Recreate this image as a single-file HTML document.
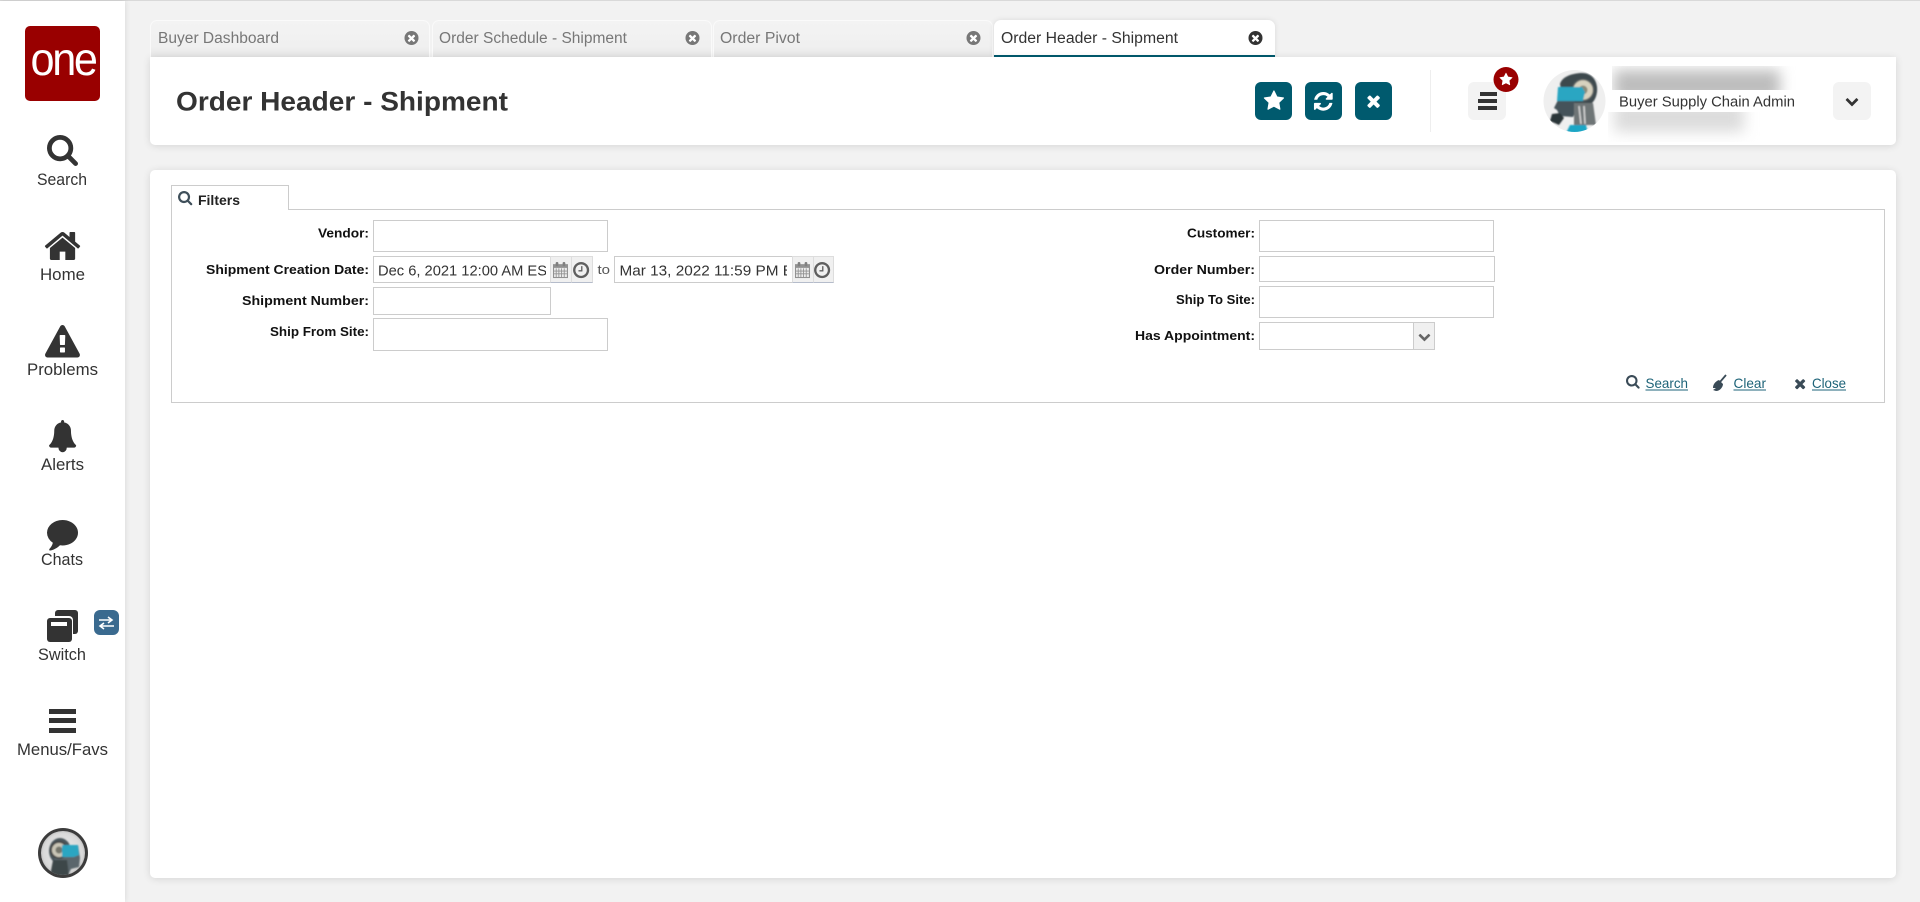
<!DOCTYPE html>
<html lang="en">
<head>
<meta charset="utf-8">
<title>Order Header - Shipment</title>
<style>
html,body{margin:0;padding:0;width:1920px;height:902px;overflow:hidden;background:#f2f2f2}
.a{position:absolute;box-sizing:border-box}
#side{left:0;top:1px;width:125px;height:901px;background:#fff;box-shadow:0 0 6px rgba(0,0,0,.12)}
#topline{left:0;top:0;width:1920px;height:1px;background:#d9d9d9}
.card{background:#fff;border-radius:0 0 5px 5px;box-shadow:0 1px 8px rgba(0,0,0,.12)}
.tab{top:20px;height:37px;background:linear-gradient(#f3f3f3,#f0f0f0 70%,#e6e6e6);border:1px solid #fafafa;border-bottom:0;border-radius:7px 7px 0 0}
.tb{background:#005a6e;border-radius:6px;top:82px;width:37px;height:38px}
.gb{background:#f3f3f3;border-radius:6px;top:82px;width:38px;height:38px}
.in{background:#fff;border:1px solid #ccc}
.cell{background:#f0f0f0;border:1px solid #ddd;border-bottom:1px solid #b5bccb;top:256px;height:27px}
.blur{overflow:hidden}
.blur div{position:absolute;filter:blur(7px)}
svg#o{position:absolute;left:0;top:0;width:1920px;height:902px}
text{font-family:"Liberation Sans",sans-serif;white-space:pre}
.nav{font-size:16.5px;fill:#333;text-anchor:start}
.tt{font-size:15.5px;fill:#777}
.lb{font-size:13px;font-weight:bold;fill:#111}
.ln{font-size:14px;fill:#1d6378}
</style>
</head>
<body>
<div class="a" id="topline"></div>
<div class="a" id="side"></div>

<div class="a tab" style="left:150px;width:280px"></div>
<div class="a tab" style="left:432px;width:280px"></div>
<div class="a tab" style="left:713px;width:280px"></div>
<div class="a" style="left:994px;top:20px;width:281px;height:37px;background:#fff;border-radius:7px 7px 0 0;border-bottom:2px solid #005a6e;box-shadow:0 0 6px rgba(0,0,0,.1)"></div>

<div class="a card" style="left:150px;top:57px;width:1746px;height:88px"></div>
<div class="a tb" style="left:1255px"></div>
<div class="a tb" style="left:1305px"></div>
<div class="a tb" style="left:1355px"></div>
<div class="a" style="left:1430px;top:70px;width:1px;height:62px;background:#eee"></div>
<div class="a gb" style="left:1468px"></div>
<div class="a gb" style="left:1833px"></div>
<div class="a blur" style="left:1612px;top:66px;width:185px;height:24px"><div style="left:2px;top:4px;width:166px;height:30px;background:#bdbdbd"></div></div>
<div class="a blur" style="left:1608px;top:112px;width:165px;height:30px"><div style="left:6px;top:-10px;width:130px;height:30px;background:#dcdcdc"></div></div>

<div class="a card" style="left:150px;top:170px;width:1746px;height:708px;border-radius:5px"></div>
<div class="a" style="left:171px;top:209px;width:1714px;height:194px;border:1px solid #ccc;background:#fff"></div>
<div class="a" style="left:171px;top:185px;width:118px;height:25px;border:1px solid #ccc;border-bottom:0;background:#fff"></div>

<div class="a in" style="left:373px;top:220px;width:235px;height:32px"></div>
<div class="a in" style="left:373px;top:256px;width:178px;height:27px"></div>
<div class="a cell" style="left:550px;width:22px"></div>
<div class="a cell" style="left:571px;width:22px"></div>
<div class="a in" style="left:614px;top:256px;width:179px;height:27px"></div>
<div class="a cell" style="left:792px;width:22px"></div>
<div class="a cell" style="left:813px;width:21px"></div>
<div class="a in" style="left:373px;top:287px;width:178px;height:28px"></div>
<div class="a in" style="left:373px;top:318px;width:235px;height:33px"></div>

<div class="a in" style="left:1259px;top:220px;width:235px;height:32px"></div>
<div class="a in" style="left:1259px;top:256px;width:236px;height:26px"></div>
<div class="a in" style="left:1259px;top:286px;width:235px;height:32px"></div>
<div class="a in" style="left:1259px;top:322px;width:176px;height:28px"></div>
<div class="a" style="left:1413px;top:322px;width:22px;height:28px;background:#f0f0f0;border:1px solid #ccc"></div>

<svg id="o" viewBox="0 0 1920 902" xmlns="http://www.w3.org/2000/svg">
<defs>
<path id="i-search" d="M1152 704q0-185-131.500-316.500t-316.500-131.500-316.500 131.500-131.500 316.500 131.500 316.500 316.500 131.500 316.500-131.500 131.500-316.500zm512 832q0 52-38 90t-90 38q-54 0-90-38l-343-342q-179 124-399 124-143 0-273.500-55.500t-225-150-150-225-55.500-273.500 55.500-273.500 150-225 225-150 273.500-55.500 273.500 55.500 225 150 150 225 55.500 273.500q0 220-124 399l343 343q37 37 37 90z"/>
<path id="i-home" d="M1472 992v480q0 26-19 45t-45 19h-384v-384h-256v384h-384q-26 0-45-19t-19-45v-480q0-1 .5-3t.5-3l575-474 575 474q1 2 1 6zm223-69l-62 74q-8 9-21 11h-3q-13 0-21-7l-692-577-692 577q-12 8-24 7-13-2-21-11l-62-74q-8-10-7-23.500t11-21.500l719-599q32-26 76-26t76 26l244 204v-195q0-14 9-23t23-9h192q14 0 23 9t9 23v408l219 182q10 8 11 21.500t-7 23.500z"/>
<path id="i-warn" d="M1024 1375v-190q0-14-9.500-23.500t-22.500-9.500h-192q-13 0-22.500 9.500t-9.500 23.500v190q0 14 9.500 23.500t22.500 9.500h192q13 0 22.500-9.500t9.500-23.500zm-2-374l18-459q0-12-10-19-13-11-24-11h-220q-11 0-24 11-10 7-10 21l17 457q0 10 10 16.500t24 6.500h185q14 0 23.500-6.500t10.500-16.500zm-14-934l768 1408q35 63-2 126-17 29-46.500 46t-63.500 17h-1536q-34 0-63.500-17t-46.500-46q-37-63-2-126l768-1408q17-31 47-49t65-18 65 18 47 49z"/>
<path id="i-bell" d="M1728 1408q0 52-38 90t-90 38h-448q0 106-75 181t-181 75-181-75-75-181h-448q-52 0-90-38t-38-90q50-42 91-88t85-119.500 74.500-158.500 50-206 19.500-260q0-152 117-282.500t307-158.500q-8-19-8-39 0-40 28-68t68-28 68 28 28 68q0 20-8 39 190 28 307 158.500t117 282.500q0 139 19.500 260t50 206 74.500 158.500 85 119.500 91 88z"/>
<path id="i-chat" d="M1792 896q0 174-120 321.500t-326 233-450 85.500q-70 0-145-8-198 175-460 242-49 14-114 22-17 2-30.500-9t-17.500-29v-1q-3-4-.5-12t2-10 4.500-9.500l6-9 7-8.500 8-9q7-8 31-34.500t34.500-38 31-39.500 32.500-51 27-59 26-76q-157-89-247.500-220t-90.500-281q0-130 71-248.500t191-204.500 286-136.500 348-50.500q244 0 450 85.500t326 233 120 321.500z"/>
<path id="i-ref" d="M1639 1056q0 5-1 7-64 268-268 434.500t-478 166.500q-146 0-282.500-55t-243.500-157l-129 129q-19 19-45 19t-45-19-19-45v-448q0-26 19-45t45-19h448q26 0 45 19t19 45-19 45l-137 137q71 66 161 102t187 36q134 0 250-65t186-179q11-17 53-117 8-23 30-23h192q13 0 22.500 9.500t9.500 22.500zm25-800v448q0 26-19 45t-45 19h-448q-26 0-45-19t-19-45 19-45l138-138q-148-137-349-137-134 0-250 65t-186 179q-11 17-53 117-8 23-30 23h-199q-13 0-22.500-9.500t-9.500-22.500v-7q65-268 270-434.500t480-166.500q146 0 284 55.500t245 156.500l130-129q19-19 45-19t45 19 19 45z"/>
<path id="i-star" d="M1728 647q0 22-26 48l-363 354 86 500q1 7 1 20 0 21-10.500 35.500t-30.500 14.500q-19 0-40-12l-449-236-449 236q-22 12-40 12-21 0-31.500-14.500t-10.500-35.500q0-6 2-20l86-500-364-354q-25-27-25-48 0-37 56-46l502-73 225-455q19-41 49-41t49 41l225 455 502 73q56 9 56 46z"/>
<path id="i-x" d="M1490 1322q0 40-28 68l-136 136q-28 28-68 28t-68-28l-294-294-294 294q-28 28-68 28t-68-28l-136-136q-28-28-28-68t28-68l294-294-294-294q-28-28-28-68t28-68l136-136q28-28 68-28t68 28l294 294 294-294q28-28 68-28t68 28l136 136q28 28 28 68t-28 68l-294 294 294 294q28 28 28 68z"/>
<path id="i-chev" d="M1683 808l-742 741q-19 19-45 19t-45-19l-742-741q-19-19-19-45.500t19-45.500l166-165q19-19 45-19t45 19l531 531 531-531q19-19 45-19t45 19l166 165q19 19 19 45.500t-19 45.500z"/>
<path id="i-clock" d="M1024 544v448q0 14-9 23t-23 9h-320q-14 0-23-9t-9-23v-64q0-14 9-23t23-9h224v-352q0-14 9-23t23-9h64q14 0 23 9t9 23zm416 352q0-148-73-273t-198-198-273-73-273 73-198 198-73 273 73 273 198 198 273 73 273-73 198-198 73-273zm224 0q0 209-103 385.500t-279.500 279.500-385.500 103-385.500-103-279.500-279.500-103-385.500 103-385.500 279.500-279.500 385.500-103 385.500 103 279.500 279.500 103 385.500z"/>
<g id="i-cal">
<rect x="0" y="2" width="14" height="13" fill="#919191"/>
<rect x="1" y="5.500" width="12" height="8.500" fill="#ececec"/>
<path d="M3 6v8M5.500 6v8M8 6v8M10.500 6v8M1 8.500h12M1 11h12" stroke="#919191" stroke-width=".8" fill="none"/>
<rect x="2.500" y="0" width="2.500" height="4" rx="1" fill="#808080"/>
<rect x="9" y="0" width="2.500" height="4" rx="1" fill="#808080"/>
</g>
<clipPath id="c1"><rect x="376" y="258" width="170" height="24"/></clipPath>
<clipPath id="c2"><rect x="617" y="258" width="170" height="24"/></clipPath>
<clipPath id="ca1"><circle cx="1574.500" cy="101" r="31"/></clipPath>
<clipPath id="ca2"><circle cx="63" cy="853" r="22"/></clipPath>
<radialGradient id="ag" cx=".5" cy=".5" r=".6"><stop offset="0" stop-color="#f0f0f0"/><stop offset=".75" stop-color="#d8d8d8"/><stop offset="1" stop-color="#9a9a9a"/></radialGradient>
<filter id="sb" x="-10%" y="-10%" width="120%" height="120%"><feGaussianBlur stdDeviation=".7"/></filter>
</defs>

<!-- logo -->
<rect x="25" y="26" width="75" height="75" rx="5" fill="#990000"/>
<text transform="translate(30.500,75) scale(.94,1)" font-size="46" fill="#fff" letter-spacing="-2.500">one</text>

<!-- nav -->
<g fill="#333">
<use href="#i-search" transform="translate(47,135) scale(.01863)"/>
<use href="#i-home" transform="translate(42.900,226.400) scale(.0219)"/>
<use href="#i-warn" transform="translate(45,325) scale(.0195)"/>
<use href="#i-bell" transform="translate(48,420) scale(.0163,.018)"/>
<use href="#i-chat" transform="translate(47,514.900) scale(.0173,.0199)"/>
<rect x="55" y="610" width="23" height="24" rx="3"/>
<rect x="46" y="616" width="27" height="27" rx="4" fill="#fff"/>
<rect x="47" y="618" width="25" height="24" rx="3"/>
<rect x="51" y="622" width="16" height="4" fill="#fff"/>
<rect x="49" y="709" width="27" height="5"/>
<rect x="49" y="718" width="27" height="5"/>
<rect x="49" y="728" width="27" height="5"/>
</g>
<text class="nav" x="37" y="185" textLength="50" lengthAdjust="spacingAndGlyphs">Search</text>
<text class="nav" x="40" y="280" textLength="45" lengthAdjust="spacingAndGlyphs">Home</text>
<text class="nav" x="27" y="375" textLength="71" lengthAdjust="spacingAndGlyphs">Problems</text>
<text class="nav" x="41" y="470" textLength="43" lengthAdjust="spacingAndGlyphs">Alerts</text>
<text class="nav" x="41" y="565" textLength="42" lengthAdjust="spacingAndGlyphs">Chats</text>
<text class="nav" x="38" y="660" textLength="48" lengthAdjust="spacingAndGlyphs">Switch</text>
<text class="nav" x="17" y="755" textLength="91" lengthAdjust="spacingAndGlyphs">Menus/Favs</text>

<!-- switch badge -->
<rect x="94" y="610" width="25" height="25" rx="6" fill="#3a6a8f"/>
<path d="M99 620h12M108 617l4 3-4 3M114 626h-13M104 623l-4 3 4 3" stroke="#fff" stroke-width="1.600" fill="none"/>

<!-- side avatar -->
<circle cx="63" cy="853" r="25" fill="#3c3c3c"/>
<circle cx="63" cy="853" r="22" fill="url(#ag)"/>
<g clip-path="url(#ca2)"><g filter="url(#sb)">
<ellipse cx="60" cy="851" rx="11" ry="13" fill="#49555a"/>
<path d="M62 845h16l2 13-1 9-8 2-3 6H52l2-15z" fill="#5a666c"/>
<path d="M53 860h14l2 16H50z" fill="#3d4649"/>
<circle cx="59" cy="850" r="8" fill="#c9c5b6" stroke="#444" stroke-width="1.800"/>
<circle cx="59" cy="850" r="3.500" fill="#75756a"/>
<path d="M62 845h16l1 10-5 2H62z" fill="#2aa6c2"/>
</g></g>

<!-- tabs -->
<text class="tt" x="158" y="43" textLength="121" lengthAdjust="spacingAndGlyphs">Buyer Dashboard</text>
<text class="tt" x="439" y="43" textLength="188" lengthAdjust="spacingAndGlyphs">Order Schedule - Shipment</text>
<text class="tt" x="720" y="43" textLength="80" lengthAdjust="spacingAndGlyphs">Order Pivot</text>
<text class="tt" style="fill:#333" x="1001" y="43" textLength="177" lengthAdjust="spacingAndGlyphs">Order Header - Shipment</text>
<circle cx="411.500" cy="38" r="7" fill="#777"/><use href="#i-x" fill="#fff" transform="translate(406,32.500) scale(.0061)"/>
<circle cx="692.500" cy="38" r="7" fill="#777"/><use href="#i-x" fill="#fff" transform="translate(687,32.500) scale(.0061)"/>
<circle cx="973.500" cy="38" r="7" fill="#777"/><use href="#i-x" fill="#fff" transform="translate(968,32.500) scale(.0061)"/>
<circle cx="1255.500" cy="38" r="7" fill="#333"/><use href="#i-x" fill="#fff" transform="translate(1250,32.500) scale(.0061)"/>

<!-- header -->
<text x="176" y="110.500" font-size="27" font-weight="bold" fill="#333" textLength="332" lengthAdjust="spacingAndGlyphs">Order Header - Shipment</text>
<use href="#i-star" fill="#fff" transform="translate(1263,90) scale(.0122)"/>
<use href="#i-ref" fill="#fff" transform="translate(1312.400,90.400) scale(.0122)"/>
<use href="#i-x" fill="#fff" transform="translate(1364.200,91.600) scale(.0105)"/>
<rect x="1480" y="92" width="17" height="4" fill="#333"/>
<rect x="1478" y="99" width="19" height="4" fill="#333"/>
<rect x="1478" y="106" width="19" height="4" fill="#333"/>
<circle cx="1506" cy="79.500" r="12.500" fill="#990000"/>
<use href="#i-star" fill="#fff" transform="translate(1499,72.500) scale(.0078)"/>

<!-- header avatar -->
<circle cx="1574.500" cy="101" r="31" fill="#efefef"/>
<g clip-path="url(#ca1)"><g filter="url(#sb)">
<path d="M1560 84c2-8 14-11 22-11 11 0 16 9 15 19-1 7-4 11-8 13l-26-2z" fill="#3d494e"/>
<path d="M1558 100h16l3 8-4 9-13-1-3-6-3-2z" fill="#44525a"/>
<path d="M1552 114l8-1 4 5-5 7-9-4z" fill="#2c3639"/>
<path d="M1574 103h19l3 22h-22z" fill="#6e7476"/>
<path d="M1579 106l2 18M1584 106l1 18" stroke="#d8d8d8" stroke-width="1.500"/>
<path d="M1570 125h16l2 8h-22z" fill="#1fa6c5"/>
<circle cx="1583" cy="90" r="10.500" fill="#d8d2bf" stroke="#596062" stroke-width="1.500"/>
<circle cx="1583" cy="90" r="4.500" fill="#8a8a78"/>
<path d="M1558 87h24l3 5-2 9h-26z" fill="#2aa6c2"/>
</g></g>
<text x="1619" y="106.500" font-size="15" fill="#333" textLength="176" lengthAdjust="spacingAndGlyphs">Buyer Supply Chain Admin</text>
<use href="#i-chev" fill="#333" transform="translate(1845,94) scale(.0078)"/>

<!-- filters -->
<use href="#i-search" fill="#3f4f5a" transform="translate(178,191) scale(.0086)"/>
<text x="198" y="205" font-size="14" font-weight="bold" fill="#222" textLength="42" lengthAdjust="spacingAndGlyphs">Filters</text>

<text class="lb" x="318" y="237.500" textLength="51" lengthAdjust="spacingAndGlyphs">Vendor:</text>
<text class="lb" x="206" y="274" textLength="163" lengthAdjust="spacingAndGlyphs">Shipment Creation Date:</text>
<text class="lb" x="242" y="305" textLength="127" lengthAdjust="spacingAndGlyphs">Shipment Number:</text>
<text class="lb" x="270" y="336" textLength="99" lengthAdjust="spacingAndGlyphs">Ship From Site:</text>
<text class="lb" x="1187" y="237.500" textLength="68" lengthAdjust="spacingAndGlyphs">Customer:</text>
<text class="lb" x="1154" y="274" textLength="101" lengthAdjust="spacingAndGlyphs">Order Number:</text>
<text class="lb" x="1176" y="304" textLength="79" lengthAdjust="spacingAndGlyphs">Ship To Site:</text>
<text class="lb" x="1135" y="340" textLength="120" lengthAdjust="spacingAndGlyphs">Has Appointment:</text>

<g clip-path="url(#c1)"><text x="378" y="275.500" font-size="14.500" fill="#333" textLength="178" lengthAdjust="spacingAndGlyphs">Dec 6, 2021 12:00 AM EST</text></g>
<g clip-path="url(#c2)"><text x="619.500" y="275.500" font-size="14.500" fill="#333" textLength="193" lengthAdjust="spacingAndGlyphs">Mar 13, 2022 11:59 PM EST</text></g>
<text x="597.500" y="274" font-size="13" fill="#555" textLength="12.500" lengthAdjust="spacingAndGlyphs">to</text>

<use href="#i-cal" transform="translate(553,262) scale(1.07)"/>
<use href="#i-clock" fill="#5f5f5f" transform="translate(571.700,260.700) scale(.0105)"/>
<use href="#i-cal" transform="translate(795,262) scale(1.07)"/>
<use href="#i-clock" fill="#5f5f5f" transform="translate(812.700,260.700) scale(.0105)"/>
<use href="#i-chev" fill="#666" transform="translate(1418,330) scale(.0072)"/>

<!-- links -->
<use href="#i-search" fill="#3a4b57" transform="translate(1626,375) scale(.0082)"/>
<text class="ln" x="1645.500" y="388" textLength="42.500" lengthAdjust="spacingAndGlyphs">Search</text>
<rect x="1645.500" y="389.500" width="42.500" height="1" fill="#1d6378"/>
<path d="M1726 375l-6 7" stroke="#3a4b57" stroke-width="1.800" fill="none"/>
<path d="M1719 380l4 4c0 3-3 7-7 7l-3-1 3-2-3 0c0-4 3-7 6-8z" fill="#3a4b57"/>
<text class="ln" x="1733.500" y="388" textLength="32.500" lengthAdjust="spacingAndGlyphs">Clear</text>
<rect x="1733.500" y="389.500" width="32.500" height="1" fill="#1d6378"/>
<use href="#i-x" fill="#3a4b57" transform="translate(1792.500,376) scale(.0085)"/>
<text class="ln" x="1812" y="388" textLength="34" lengthAdjust="spacingAndGlyphs">Close</text>
<rect x="1812" y="389.500" width="34" height="1" fill="#1d6378"/>
</svg>
</body>
</html>
